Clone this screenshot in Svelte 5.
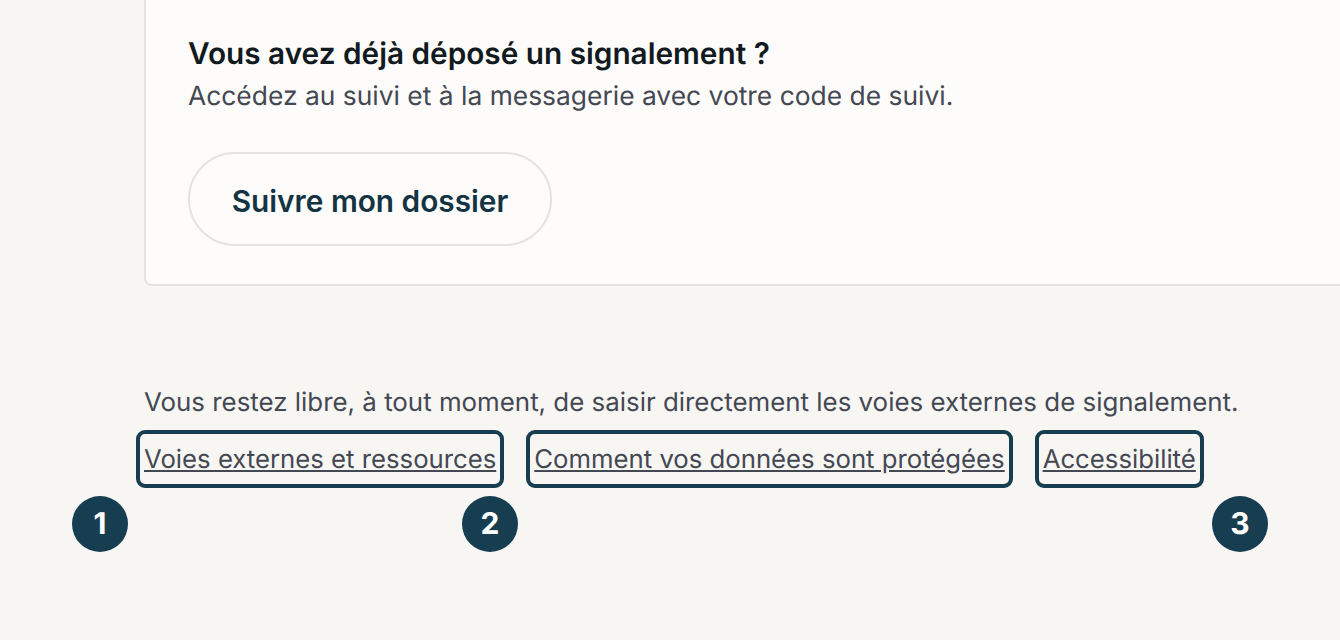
<script>
    const links = [
        { label: "Voies externes et ressources", badge: 1 },
        { label: "Comment vos données sont protégées", badge: 2 },
        { label: "Accessibilité", badge: 3 }
    ];
</script>

<main class="page">
    <section class="card">
        <h2>Vous avez déjà déposé un signalement ?</h2>
        <p class="sub">Accédez au suivi et à la messagerie avec votre code de suivi.</p>
        <button type="button" class="track">Suivre mon dossier</button>
    </section>

    <footer class="foot">
        <p class="note">Vous restez libre, à tout moment, de saisir directement les voies externes de signalement.</p>
        <nav class="links">
            {#each links as link}
                <a href="#top">{link.label}</a>
            {/each}
        </nav>
    </footer>

    <span class="badge one">1</span>
    <span class="badge two">2</span>
    <span class="badge three">3</span>
</main>

<style>
    :global(body) {
        margin: 0;
        background: #f7f6f3;
        overflow: hidden;
    }
    .page {
        position: relative;
        height: 640px;
        overflow: hidden;
        font-family: Inter, "Noto Sans", sans-serif;
        text-rendering: geometricPrecision;
        padding-left: 144px;
        box-sizing: border-box;
    }
    .card {
        background: #fdfcfa;
        border: 2px solid #e4e3df;
        border-top: 0;
        border-right: 0;
        border-bottom-left-radius: 8px;
        padding: 36px 0 38px 42px;
    }
    h2 {
        margin: 0;
        font-size: 29.75px;
        line-height: 36px;
        font-weight: 600;
        color: #121a21;
    }
    .sub {
        margin: 6px 0 0;
        font-size: 26.4px;
        line-height: 36px;
        color: #444853;
    }
    .track {
        display: block;
        margin-top: 38px;
        width: 364px;
        height: 94px;
        border: 2px solid #e4e3df;
        border-radius: 47px;
        background: transparent;
        font-family: inherit;
        font-size: 29.8px;
        font-weight: 600;
        color: #143444;
        padding: 3px 0 0;
    }
    .foot {
        margin-top: 99px;
        font-size: 25.88px;
        line-height: 36px;
        color: #444853;
    }
    .note {
        margin: 0;
    }
    .links {
        display: flex;
        gap: 38px;
        margin-top: 17px;
    }
    .links a {
        color: #444853;
        font-size: 25.72px;
        line-height: 40px;
        padding-top: 2px;
        text-decoration: underline;
        outline: 4px solid #173d50;
        outline-offset: 4px;
        border-radius: 1px;
    }
    .badge {
        position: absolute;
        top: 496px;
        width: 56px;
        height: 56px;
        border-radius: 50%;
        background: #173d50;
        color: #fff;
        font-size: 30px;
        font-weight: 700;
        display: flex;
        align-items: center;
        justify-content: center;
    }
    .one { left: 72px; }
    .two { left: 462px; }
    .three { left: 1212px; }
</style>
